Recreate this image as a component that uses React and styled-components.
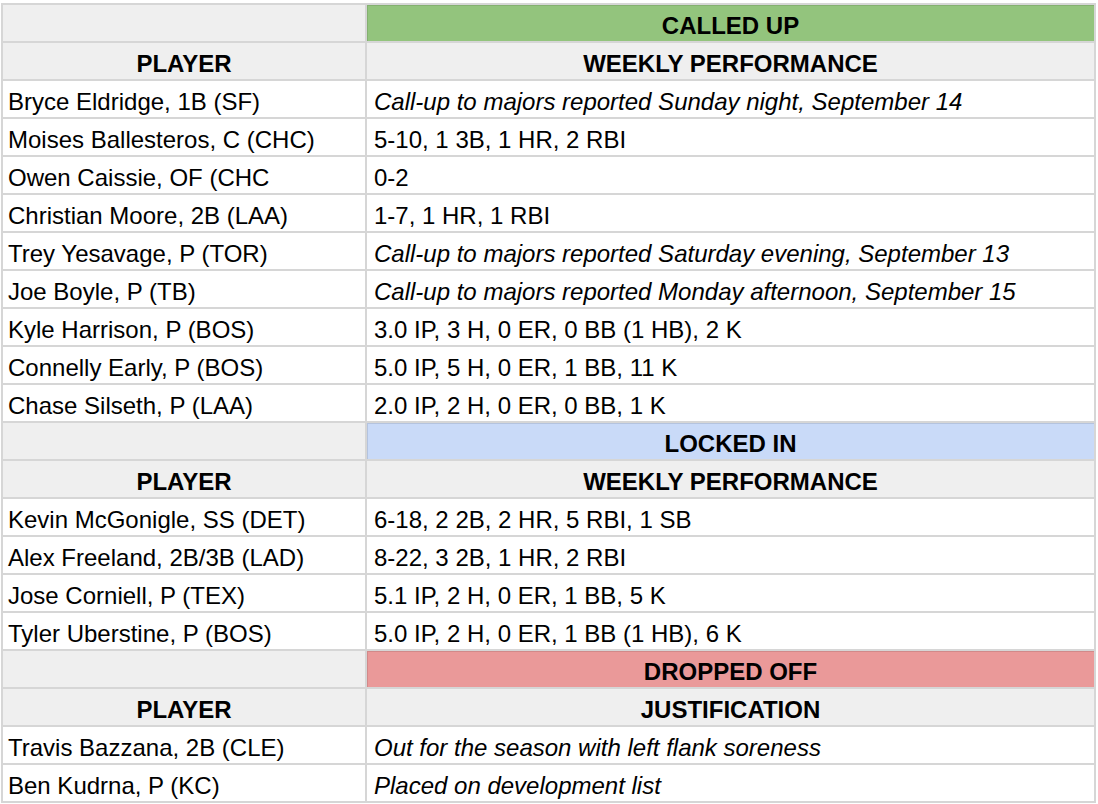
import React from 'react';
import styled, { createGlobalStyle } from 'styled-components';

const GlobalStyle = createGlobalStyle`
    html, body {
        margin: 0;
        padding: 0;
        background: #ffffff;
    }
    body {
        font-family: "Liberation Sans", Arial, sans-serif;
        color: #000000;
    }
`;

const SECTION_COLORS = {
    green: '#93c47d',
    blue: '#c9daf8',
    red: '#ea9999',
};

const Sheet = styled.div`
    display: grid;
    grid-template-columns: 362px 727px;
    grid-auto-rows: 36px;
    gap: 2px;
    width: max-content;
    margin: 3px 0 0 1px;
    border: 2px solid #d6d6d6;
    background: #d6d6d6;
`;

const Cell = styled.div`
    display: flex;
    align-items: flex-end;
    justify-content: flex-start;
    padding: 0 6px 2px ${p => (p.$second ? '7px' : '5px')};
    background: #ffffff;
    font-size: 24px;
    line-height: 27px;
    font-style: ${p => (p.$italic ? 'italic' : 'normal')};
    white-space: nowrap;
    overflow: hidden;
`;

const GreyCell = styled(Cell)`
    background: #efefef;
`;

const HeaderCell = styled(Cell)`
    background: #efefef;
    justify-content: center;
    padding: 0 6px 2px 6px;
    font-weight: bold;
`;

const SectionCell = styled(Cell)`
    background: ${p => SECTION_COLORS[p.$tone]};
    box-shadow: inset 1px 1px 0 rgba(0, 0, 0, 0.1);
    justify-content: center;
    padding: 0 6px 2px 6px;
    font-weight: bold;
`;

const sections = [
    {
        title: 'CALLED UP',
        tone: 'green',
        second: 'WEEKLY PERFORMANCE',
        rows: [
            ['Bryce Eldridge, 1B (SF)', 'Call-up to majors reported Sunday night, September 14', true],
            ['Moises Ballesteros, C (CHC)', '5-10, 1 3B, 1 HR, 2 RBI'],
            ['Owen Caissie, OF (CHC', '0-2'],
            ['Christian Moore, 2B (LAA)', '1-7, 1 HR, 1 RBI'],
            ['Trey Yesavage, P (TOR)', 'Call-up to majors reported Saturday evening, September 13', true],
            ['Joe Boyle, P (TB)', 'Call-up to majors reported Monday afternoon, September 15', true],
            ['Kyle Harrison, P (BOS)', '3.0 IP, 3 H, 0 ER, 0 BB (1 HB), 2 K'],
            ['Connelly Early, P (BOS)', '5.0 IP, 5 H, 0 ER, 1 BB, 11 K'],
            ['Chase Silseth, P (LAA)', '2.0 IP, 2 H, 0 ER, 0 BB, 1 K'],
        ],
    },
    {
        title: 'LOCKED IN',
        tone: 'blue',
        second: 'WEEKLY PERFORMANCE',
        rows: [
            ['Kevin McGonigle, SS (DET)', '6-18, 2 2B, 2 HR, 5 RBI, 1 SB'],
            ['Alex Freeland, 2B/3B (LAD)', '8-22, 3 2B, 1 HR, 2 RBI'],
            ['Jose Corniell, P (TEX)', '5.1 IP, 2 H, 0 ER, 1 BB, 5 K'],
            ['Tyler Uberstine, P (BOS)', '5.0 IP, 2 H, 0 ER, 1 BB (1 HB), 6 K'],
        ],
    },
    {
        title: 'DROPPED OFF',
        tone: 'red',
        second: 'JUSTIFICATION',
        rows: [
            ['Travis Bazzana, 2B (CLE)', 'Out for the season with left flank soreness', true],
            ['Ben Kudrna, P (KC)', 'Placed on development list', true],
        ],
    },
];

function App() {
    return (
        <>
            <GlobalStyle />
            <Sheet>
                {sections.map(section => (
                    <React.Fragment key={section.title}>
                        <GreyCell />
                        <SectionCell $tone={section.tone}>{section.title}</SectionCell>
                        <HeaderCell>PLAYER</HeaderCell>
                        <HeaderCell>{section.second}</HeaderCell>
                        {section.rows.map(([player, note, italic]) => (
                            <React.Fragment key={player}>
                                <Cell>{player}</Cell>
                                <Cell $second $italic={italic}>{note}</Cell>
                            </React.Fragment>
                        ))}
                    </React.Fragment>
                ))}
            </Sheet>
        </>
    );
}

export default App;
